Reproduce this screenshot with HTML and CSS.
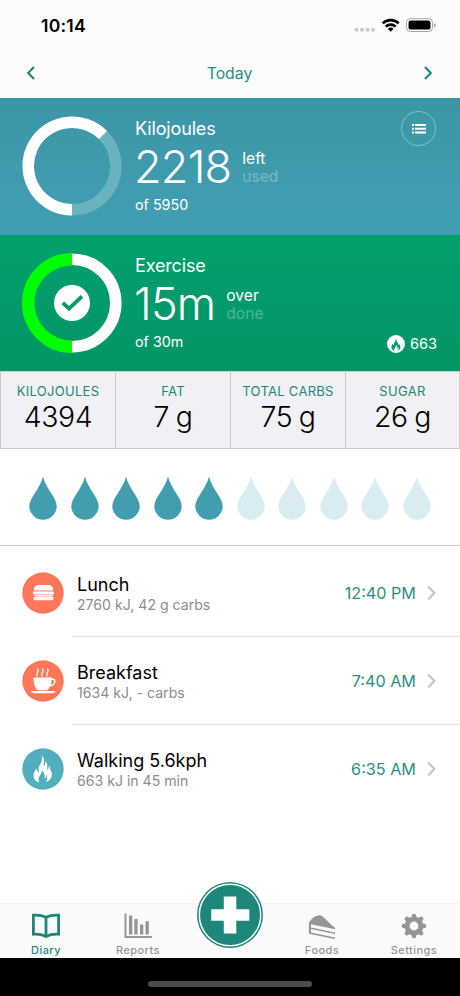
FILE: index.html
```html
<!DOCTYPE html>
<html lang="en">
<head>
<meta charset="utf-8">
<title>Diary</title>
<link rel="stylesheet" href="styles.css">
</head>
<body>
<div class="app">
  <header class="header">
    <div class="status">
      <span class="clock">10:14</span>
      <svg class="status-icons" width="82" height="16" viewBox="0 0 82 16">
        <g fill="#c8c8c8"><circle cx="2.5" cy="11.8" r="2"/><circle cx="8" cy="11.8" r="2"/><circle cx="13.500" cy="11.800" r="2"/><circle cx="19" cy="11.800" r="2"/></g>
        <g fill="none" stroke="#000" stroke-width="2.6"><path d="M28.700 5.400a11.500 11.500 0 0 1 16 0"/><path d="M31.700 8.700a7 7 0 0 1 10 0"/></g>
        <path d="M33.800 10.800a4.200 4.200 0 0 1 5.800 0L36.700 13.700z"/>
        <rect x="52.500" y=".7" width="26" height="12.800" rx="3.800" fill="#fff" stroke="#a5a5a5"/>
        <rect x="54.500" y="2.600" width="22" height="9" rx="2.200"/>
        <path d="M80 5v4.400q1.700-.8 1.700-2.200t-1.700-2.200z" fill="#a5a5a5"/>
      </svg>
    </div>
    <nav class="daybar">
      <svg width="10" height="16" viewBox="0 0 10 16"><path d="M8 2 2.200 8 8 14"/></svg>
      <span class="day">Today</span>
      <svg width="10" height="16" viewBox="0 0 10 16"><path d="M2 2l5.800 6L2 14"/></svg>
    </nav>
  </header>

  <section class="panel energy">
    <svg class="ring" width="100" height="100" viewBox="0 0 100 100">
      <circle class="arc rest" cx="50" cy="50" r="43.800"/>
      <path class="arc" d="M50 93.800A43.800 43.800 0 1 1 81 19"/>
    </svg>
    <div class="info">
      <div class="title">Kilojoules</div>
      <div class="figure">
        <span class="big">2218</span>
        <span class="modes"><span>left</span><span class="off">used</span></span>
      </div>
      <div class="goal">of 5950</div>
    </div>
    <span class="listbtn">
      <svg width="14" height="10" viewBox="0 0 14 10" fill="#fff"><path d="M0 0h2v2H0zM3 0h11v2H3zM0 3.800h2v2H0zM3 3.800h11v2H3zM0 7.500h2v2H0zM3 7.500h11v2H3z"/></svg>
    </span>
  </section>

  <section class="panel exercise">
    <svg class="ring" width="100" height="100" viewBox="0 0 100 100">
      <path class="arc" d="M50 6.200a43.800 43.800 0 0 1 0 87.600"/>
      <path class="arc over" d="M50 93.800a43.800 43.800 0 0 1 0-87.600"/>
      <circle cx="50" cy="50" r="18" fill="#fff"/>
      <path class="tick" d="M40.800 49.800l6.200 5.900L60 43.300"/>
    </svg>
    <div class="info">
      <div class="title">Exercise</div>
      <div class="figure">
        <span class="big">15m</span>
        <span class="modes"><span>over</span><span class="off">done</span></span>
      </div>
      <div class="goal">of 30m</div>
    </div>
    <span class="burned">
      <svg width="18" height="18" viewBox="0 0 42 42"><circle cx="21" cy="21" r="21" fill="#fff"/><path fill="#039a69" d="M20 7c2 6-1 8-3 11-1 2-1 5 0 7-2-1-3-3-3-5-4 4-5 9-2 13 1 2 3 3 5 4-1-3 0-6 2-8 1-1 2-3 2-5 3 2 4 5 3 9 2-1 2-3 3-5 1 3 0 6-1 9 5-3 7-8 4-13l-1-3c-1 2-1 3-2 4 0-5-1-7-3-9 0 3 0 4-1 6 1-6 0-11-3-15z"/></svg>
      <span>663</span>
    </span>
  </section>

  <section class="stats">
    <div class="stat"><span class="label">KILOJOULES</span><span class="value">4394</span></div>
    <div class="stat"><span class="label">FAT</span><span class="value">7 g</span></div>
    <div class="stat"><span class="label">TOTAL CARBS</span><span class="value">75 g</span></div>
    <div class="stat"><span class="label">SUGAR</span><span class="value">26 g</span></div>
  </section>

  <svg class="defs" width="0" height="0"><defs>
    <path id="drop" d="M14 .5C15.200 6 18.500 11.500 22.500 17.800 25.500 22.500 27.700 26 27.700 30.300A13.700 13.500 0 0 1 .3 30.300C.3 26 2.500 22.500 5.500 17.800 9.500 11.500 12.800 6 14 .5z"/>
  </defs></svg>
  <section class="water">
    <svg class="drop full" viewBox="0 0 28 44"><use href="#drop"/></svg>
    <svg class="drop full" viewBox="0 0 28 44"><use href="#drop"/></svg>
    <svg class="drop full" viewBox="0 0 28 44"><use href="#drop"/></svg>
    <svg class="drop full" viewBox="0 0 28 44"><use href="#drop"/></svg>
    <svg class="drop full" viewBox="0 0 28 44"><use href="#drop"/></svg>
    <svg class="drop" viewBox="0 0 28 44"><use href="#drop"/></svg>
    <svg class="drop" viewBox="0 0 28 44"><use href="#drop"/></svg>
    <svg class="drop" viewBox="0 0 28 44"><use href="#drop"/></svg>
    <svg class="drop" viewBox="0 0 28 44"><use href="#drop"/></svg>
    <svg class="drop" viewBox="0 0 28 44"><use href="#drop"/></svg>
  </section>

  <main class="log">
    <article class="entry">
      <svg class="badge" width="42" height="42" viewBox="0 0 42 42"><circle cx="21" cy="21" r="20.700" fill="#fe7758"/>
        <g fill="#fff"><path d="M12 18.400c-.6-3.500 2-5.300 5.500-5.300h8c3.600 0 6.100 1.800 5.500 5.300z"/><rect x="10.800" y="19.400" width="21.200" height="3.200" rx="1"/><path d="M12 23.100h19l-1 1.300H13z"/><path d="M11.500 24.700h20v2q0 1.600-1.600 1.600H13.100q-1.600 0-1.600-1.600z"/></g></svg>
      <div class="body">
        <div class="text"><div class="name">Lunch</div><div class="detail">2760 kJ, 42 g carbs</div></div>
        <span class="time">12:40 PM</span>
        <svg class="chev" width="9" height="16" viewBox="0 0 9 16"><path d="M1.200 1.500 7.500 8l-6.300 6.500"/></svg>
      </div>
    </article>
    <article class="entry">
      <svg class="badge" width="42" height="42" viewBox="0 0 42 42"><circle cx="21" cy="21" r="20.700" fill="#fe7758"/>
        <path fill="#fff" d="M11.500 17.500h18.300v1h1.200c4.500 0 3.300 7.600-3.500 8.200-.6 1.700-1.500 2.900-2.800 3.500h-8.500c-3.300-1.700-4.700-5.700-4.700-12.700zm18.100 2.600c-.1 1.900-.4 3.500-.9 4.800 3.500-.3 4.500-4.800 2-4.800zM9 31h24.600c-.6 1.600-2.200 2.300-4.200 2.300H13.200c-2 0-3.600-.7-4.200-2.300z"/>
        <path fill="none" stroke="#fff" stroke-width="1.300" stroke-linecap="round" d="M15.500 9c2.500 2.300-2 4-.5 7M20.500 9c2.500 2.300-2 4-.5 7M25.500 9c2.500 2.300-2 4-.5 7"/></svg>
      <div class="body">
        <div class="text"><div class="name">Breakfast</div><div class="detail">1634 kJ, - carbs</div></div>
        <span class="time">7:40 AM</span>
        <svg class="chev" width="9" height="16" viewBox="0 0 9 16"><path d="M1.200 1.500 7.500 8l-6.300 6.500"/></svg>
      </div>
    </article>
    <article class="entry">
      <svg class="badge" width="42" height="42" viewBox="0 0 42 42"><circle cx="21" cy="21" r="20.700" fill="#51aebd"/>
        <path fill="#fff" d="M19.500 7.500c1.500 5-.8 7.500-2.300 10.500-1 2.200-.6 4.500 0 6.500-1.500-.8-2.200-2-2.500-4-3.700 4-4.200 8-1.700 11.500 1 1.200 2.500 2 4 2.500-1-2.500-.4-5 1.200-7.300 1-1.500 1.800-3 1.600-5 2.500 2 3.500 5 2.600 8.500 1.500-.8 2-2.200 2.300-4 1 2.800.3 5.300-.9 7.600 5.200-2 7-6.300 5.700-10.300-.8-2.200-2-4-1.500-6.500-1.500 1.500-1.900 3-2 4.800-.8-1-.8-2.300-.7-3.700.2-2-.5-4-2.300-5.300.4 2-.1 3.500-1 5-.9-1.500-.2-3 0-4.500.3-2.700-.5-4.800-2.500-6.300z"/></svg>
      <div class="body">
        <div class="text"><div class="name">Walking 5.6kph</div><div class="detail">663 kJ in 45 min</div></div>
        <span class="time">6:35 AM</span>
        <svg class="chev" width="9" height="16" viewBox="0 0 9 16"><path d="M1.200 1.500 7.500 8l-6.300 6.500"/></svg>
      </div>
    </article>
  </main>

  <nav class="tabs">
    <div class="tab active">
      <svg width="28" height="26" viewBox="0 0 28 26"><path fill="none" stroke="currentColor" stroke-width="2.800" d="M1.400 2.200c4.500-.2 8.800.2 12.600 2 3.800-1.800 8.100-2.200 12.600-2v19c-4.600-.2-9 .3-12.600 2.200-3.600-1.900-8-2.400-12.600-2.200zM14 4.200v18.500"/></svg>
      <span>Diary</span>
    </div>
    <div class="tab">
      <svg width="28" height="26" viewBox="0 0 28 26"><path fill="currentColor" d="M.5.500h2v22.600h25.300v2H.5zM5 2.500h3.300v19H5zM10.300 6h3.300v15.500h-3.300zM16 11.500h3.300v10H16zM21.500 8.300h3.300v13.200h-3.300z"/></svg>
      <span>Reports</span>
    </div>
    <div class="tab">
      <div class="add">
        <svg width="66" height="66" viewBox="0 0 66 66"><circle cx="33" cy="33" r="33" fill="#1e8779"/><circle cx="33" cy="33" r="30.700" fill="none" stroke="#fff" stroke-width="1.500"/><path fill="#fff" d="M26.800 14.500h12.500v12.800h13v11.400h-13v12.800H26.800V38.700H14.200V27.300h12.600z"/></svg>
      </div>
    </div>
    <div class="tab">
      <svg width="28" height="26" viewBox="0 0 28 26"><path fill="currentColor" d="M1 9.500C4 5 7 2.800 11 2.300q2.500-.3 4.200 1.700L27 15.200z"/><path fill="currentColor" d="M1 9l26 5.500v1.700L3 11.200v3.300l24 5v1.600l-24-5v3.400l24 5v1.600L1 20.800z"/></svg>
      <span>Foods</span>
    </div>
    <div class="tab">
      <svg width="28" height="26" viewBox="0 0 28 26"><circle cx="14" cy="13" r="6.900" fill="none" stroke="currentColor" stroke-width="5"/><g stroke="currentColor" stroke-width="4.600" stroke-linecap="round"><path d="M14 3v1.500M14 21.500V23M4 13h1.500M22.500 13H24M6.930 5.930l1 1M20.070 19.070l1 1M6.930 20.070l1-1M20.070 6.930l1-1"/></g></svg>
      <span>Settings</span>
    </div>
  </nav>
  <footer class="homebar"><span class="handle"></span></footer>
</div>
</body>
</html>
```
FILE: styles.css
```css
* { box-sizing: border-box; }
body {
  margin: 0;
  background: #fff;
  color: #000;
  font-family: Inter, "Liberation Sans", sans-serif;
}
svg { display: block; flex: none; }
.app { width: 460px; height: 996px; display: flex; flex-direction: column; overflow: hidden; }

.header { height: 98px; background: #fcfcfc; padding-top: 13px; }
.status { display: flex; justify-content: space-between; align-items: center; height: 24px; padding: 0 24px 0 41px; }
.clock { font-size: 17.6px; font-weight: 600; letter-spacing: .2px; }
.status-icons { margin-top: 2px; }
.daybar { display: flex; justify-content: space-between; align-items: center; height: 24px; margin-top: 24px; padding: 0 27px 0 26px; }
.daybar path { fill: none; stroke: #1e8779; stroke-width: 2.1; }
.day { color: #2b8f80; font-size: 15.8px; margin-top: 1px; }

.panel { display: flex; height: 137px; padding-left: 22px; color: #fff; position: relative; }
.energy { background: linear-gradient(#3c96a8, #429eb1); }
.exercise { background: linear-gradient(#03a06e, #03996a 60%, #039565); height: 136px; }
.ring { margin-top: 18px; }
.arc { fill: none; stroke: #fff; stroke-width: 11.5; }
.rest { stroke: #69b3be; }
.over { stroke: #0f0; stroke-width: 12.5; }
.tick { fill: none; stroke: #039a69; stroke-width: 3.8; }
.info { margin: 20px 0 0 13px; }
.title { font-size: 18px; line-height: 22px; letter-spacing: -.15px; }
.figure { display: flex; align-items: center; height: 48px; margin-top: 2px; }
.big { font-size: 45px; line-height: 48px; font-weight: 300; letter-spacing: -.8px; margin-left: -1px; padding-top: 2px; }
.modes { display: flex; flex-direction: column; margin-left: 11px; font-size: 15.6px; line-height: 18px; margin-top: 4px; }
.off { color: rgba(255, 255, 255, .3); }
.goal { font-size: 14.3px; line-height: 20px; margin-top: 5px; }
.listbtn { position: absolute; right: 24px; top: 13px; width: 35px; height: 35px; border: 1px solid #7ec3d0; border-radius: 50%; display: flex; align-items: center; justify-content: center; }
.burned { position: absolute; right: 23px; bottom: 18px; display: flex; align-items: center; gap: 5px; font-size: 14.5px; line-height: 18px; }

.stats { display: grid; grid-template-columns: 114px 115px 115px 1fr; height: 78px; background: #f1f0f5; border: 1px solid #c9c9cc; border-top-color: #b5d8cc; }
.stat { display: flex; flex-direction: column; align-items: center; padding-top: 10px; }
.stat + .stat { border-left: 1px solid #c9c9cc; }
.label { color: #1e8779; font-size: 13px; line-height: 18px; letter-spacing: .3px; white-space: nowrap; }
.value { font-size: 28.4px; line-height: 34px; font-weight: 300; letter-spacing: -.4px; word-spacing: -1px; }

.defs { position: absolute; }
.water { display: flex; justify-content: space-between; align-items: flex-start; height: 97px; padding: 27px 29px 0; border-bottom: 1px solid #c4c4c6; }
.drop { width: 28px; height: 44px; fill: #d9ecf2; }
.drop.full { fill: #429daf; }

.log { height: 357px; padding-top: 3px; }
.entry { display: flex; height: 88px; padding-left: 22px; }
.badge { margin-top: 22.6px; }
.body { flex: 1; display: flex; align-items: center; margin-left: 8px; padding: 0 24px 0 5px; border-bottom: 1px solid #e2e2e4; }
.entry:last-child .body { border-color: transparent; }
.text { flex: 1; padding-top: 3px; }
.name { font-size: 18px; line-height: 22px; }
.detail { font-size: 14.1px; line-height: 18px; color: #8d8d90; }
.time { color: #2b8f80; font-size: 16.2px; padding-top: 1px; }
.chev { margin-left: 11px; }
.chev path { fill: none; stroke: #c2c2c6; stroke-width: 1.9; }

.tabs { display: grid; grid-template-columns: repeat(5, 92px); height: 55px; background: #fafafa; border-top: 1px solid #f3f3f3; }
.tab { display: flex; flex-direction: column; align-items: center; padding-top: 9px; color: #959595; font-size: 10.9px; line-height: 14px; letter-spacing: .5px; font-weight: 500; position: relative; }
.tab span { margin-top: 4px; }
.tab.active { color: #1e8779; }
.add { position: absolute; left: 13px; top: -22px; }
.homebar { height: 38px; background: #000; display: flex; justify-content: center; align-items: flex-end; padding-bottom: 9px; }
.handle { width: 164px; height: 6px; border-radius: 3px; background: #4c4c4c; }
```
